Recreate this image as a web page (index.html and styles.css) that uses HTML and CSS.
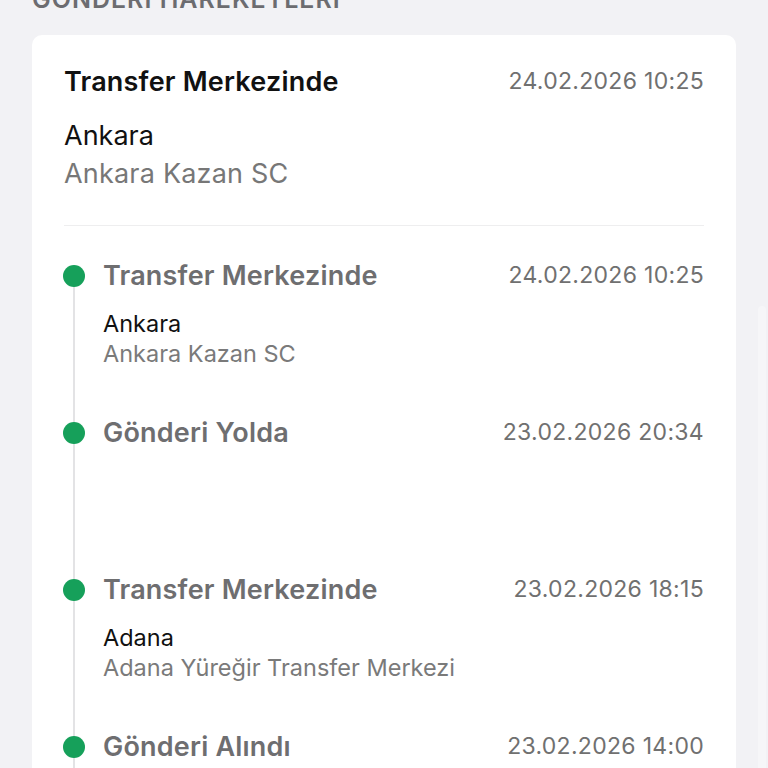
FILE: index.html
```html
<!DOCTYPE html>
<html lang="tr">
<head>
<meta charset="utf-8">
<title>Gönderi Hareketleri</title>
<link rel="stylesheet" href="styles.css">
</head>
<body>
<div class="page">
	<h2 class="section-title">GÖNDERİ HAREKETLERİ</h2>
	<div class="card">
		<div class="current">
			<div class="row">
				<span class="status">Transfer Merkezinde</span>
				<span class="date">24.02.2026 10:25</span>
			</div>
			<div class="city">Ankara</div>
			<div class="branch">Ankara Kazan SC</div>
		</div>
		<ul class="timeline">
			<li class="step">
				<div class="row">
					<span class="status">Transfer Merkezinde</span>
					<span class="date">24.02.2026 10:25</span>
				</div>
				<div class="city">Ankara</div>
				<div class="branch">Ankara Kazan SC</div>
			</li>
			<li class="step">
				<div class="row">
					<span class="status">Gönderi Yolda</span>
					<span class="date">23.02.2026 20:34</span>
				</div>
				<div class="city"></div>
				<div class="branch"></div>
			</li>
			<li class="step">
				<div class="row">
					<span class="status">Transfer Merkezinde</span>
					<span class="date">23.02.2026 18:15</span>
				</div>
				<div class="city">Adana</div>
				<div class="branch">Adana Yüreğir Transfer Merkezi</div>
			</li>
			<li class="step">
				<div class="row">
					<span class="status">Gönderi Alındı</span>
					<span class="date">23.02.2026 14:00</span>
				</div>
				<div class="city">Adana</div>
				<div class="branch">Adana Yüreğir Şube</div>
			</li>
		</ul>
	</div>
</div>
<div class="scroll-thumb"></div>
</body>
</html>
```

FILE: styles.css
```css
*{ margin:0; padding:0; box-sizing:border-box;}
html, body{ background:#f2f2f5; overflow:hidden;}
body{ font-family:Inter, "Noto Sans", Arial, sans-serif; color:#111;}
li{ list-style:none;}

.page{ margin-top:-15px; padding:0 32px;}
.section-title{ font-size:25px; line-height:28px; font-weight:600; color:#6c6c70; letter-spacing:1px; margin-bottom:22px;}

.card{ background:#fff; border-radius:10px; padding:32px 32px 40px;}

.row{ display:flex; justify-content:space-between; align-items:center;}
.status{ font-size:27px; font-weight:600; letter-spacing:0.2px;}
.date{ font-size:23px; color:#707070; letter-spacing:0.3px;}

.current .row{ height:28px;}
.current .status{ color:#111;}
.current .city{ margin-top:22px; font-size:27px; line-height:38px; color:#111;}
.current .branch{ font-size:27px; line-height:38px; color:#777; letter-spacing:0.2px;}
.current{ padding-bottom:32px; border-bottom:1px solid #eeeeef;}

.timeline{ margin-top:33px;}
.step{ position:relative; padding:0 0 48px 28px; border-left:2px solid #e3e3e5; margin-left:9px;}
.step:first-child{ border-image:linear-gradient(to bottom, transparent 16px, #e3e3e5 16px) 1;}
.step::before{ content:""; position:absolute; left:-12px; top:6px; width:22px; height:22px; border-radius:50%; background:#16a05a;}
.step .row{ height:32px;}
.step .status{ color:#6e6e70;}
.step .city{ margin-top:18px; font-size:23.5px; line-height:30px; height:30px; color:#111;}
.step .branch{ font-size:23.5px; line-height:30px; height:30px; color:#7a7a7a;}
.step .city + .branch{ margin-bottom:-1px;}

.scroll-thumb{ position:fixed; right:2px; top:306px; width:8px; height:470px; border-radius:4px; background:#f6f6f8;}
```
